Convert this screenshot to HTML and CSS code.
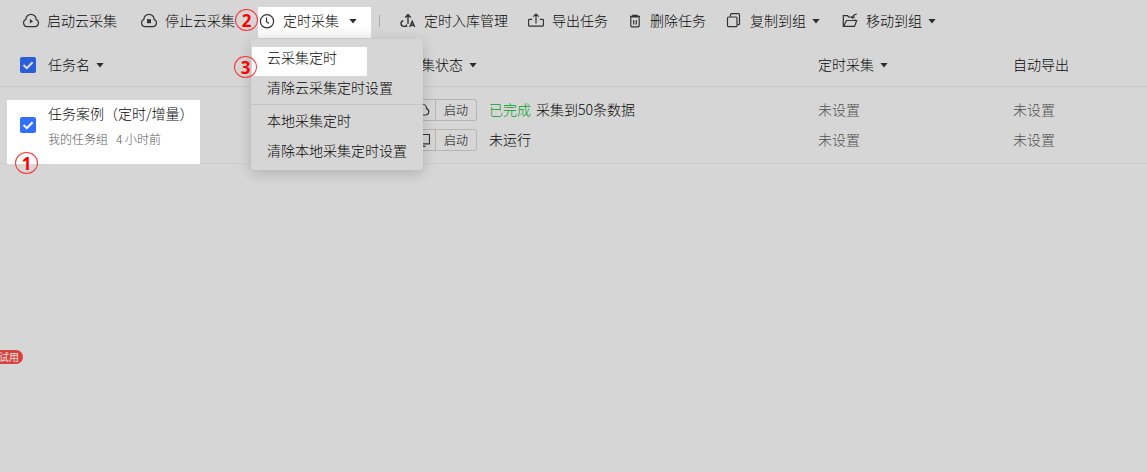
FILE: index.html
```html
<!DOCTYPE html>
<html lang="zh-CN">
<head>
    <meta charset="utf-8">
    <title>任务列表</title>
    <link rel="stylesheet" href="styles.css">
</head>
<body>
    <div class="toolbar">
        <div class="tool">
            <svg class="icon" viewBox="0 0 16 16"><path d="M4.2 13.7h7.6a3.8 3.8 0 0 0 1.3-7.3A5.1 5.1 0 0 0 2.9 6.4a3.8 3.8 0 0 0 1.3 7.3z"/><path class="fill" d="M6.9 6v4.4L10 8.2z"/></svg>
            <span>启动云采集</span>
        </div>
        <div class="tool">
            <svg class="icon" viewBox="0 0 16 16"><path d="M4.2 13.7h7.6a3.8 3.8 0 0 0 1.3-7.3A5.1 5.1 0 0 0 2.9 6.4a3.8 3.8 0 0 0 1.3 7.3z"/><path class="fill" d="M6 6.2h4v4H6z"/></svg>
            <span>停止云采集</span>
        </div>
        <div class="tool active">
            <svg class="icon" viewBox="0 0 16 16"><circle cx="8" cy="8.3" r="6.6"/><path d="M7.5 4.4v4.3l2.6 1.8"/></svg>
            <span>定时采集</span>
            <i class="caret"></i>
        </div>
        <div class="divider"></div>
        <div class="tool">
            <svg class="icon" viewBox="0 0 16 16"><path d="M8 11V1.6M5.2 4.4L8 1.6l2.8 2.8M3.3 7.8C1.6 8.2 1 9.2 1 10.6c0 2 1.3 2.8 3 2.8h2.4v-1.8M9.8 14l2.4-5.8 2.5 5.8M10.6 12.2h3.2" stroke-width="1.4"/></svg>
            <span>定时入库管理</span>
        </div>
        <div class="tool">
            <svg class="icon" viewBox="0 0 16 16"><path d="M4.2 6.4H1.5a1 1 0 0 0-1 1v4.7a1 1 0 0 0 1 1h13a1 1 0 0 0 1-1V7.4a1 1 0 0 0-1-1h-2.7M8 10.5V1.2M5.3 3.7L8 1l2.7 2.7"/></svg>
            <span>导出任务</span>
        </div>
        <div class="tool">
            <svg class="icon narrow" viewBox="0 0 14 16"><path class="fill" d="M4.2 1.8h5.6v1H12v1.8H2V2.8h2.2z"/><path d="M2.8 4.4v8.4a1 1 0 0 0 1 1h6.4a1 1 0 0 0 1-1V4.4M5.7 7v4.6M8.3 7v4.6"/></svg>
            <span>删除任务</span>
        </div>
        <div class="tool">
            <svg class="icon" viewBox="0 0 16 16"><rect x="1.5" y="4" width="9.5" height="9.7" rx="1"/><path d="M4.5 3.8V1.7a1 1 0 0 1 1-1h7a1 1 0 0 1 1 1v9a1 1 0 0 1-1 1h-1.3"/></svg>
            <span>复制到组</span>
            <i class="caret near"></i>
        </div>
        <div class="tool last">
            <svg class="icon" viewBox="0 0 16 16"><path d="M1.6 13.4L4.4 7.5h10.3l-2.2 5.9H1.3V2.6h4.2l1.4 1.6h1.6M13 7.2v-1M14.7 1.2c-2.5.2-3.8 1.4-4.2 3.8M8.9 3.3l1.6 1.9 2.2-1.4"/></svg>
            <span>移动到组</span>
            <i class="caret near"></i>
        </div>
    </div>

    <div class="table">
        <div class="row head">
            <div class="cell name">
                <span class="checkbox"><svg viewBox="0 0 16 16"><path d="M3.5 8l3.3 3.2 5.8-6"/></svg></span>
                <span>任务名</span><i class="caret near"></i>
            </div>
            <div class="cell"><span>采集状态</span><i class="caret near"></i></div>
            <div class="cell"><span>定时采集</span><i class="caret near"></i></div>
            <div class="cell"><span>自动导出</span></div>
        </div>
        <div class="row task">
            <div class="task-name">
                <span class="checkbox"><svg viewBox="0 0 16 16"><path d="M3.5 8l3.3 3.2 5.8-6"/></svg></span>
                <div>
                    <div class="title">任务案例（定时/增量）</div>
                    <div class="info"><span>我的任务组</span><span>4 小时前</span></div>
                </div>
            </div>
            <div class="lines">
                <div class="line">
                    <div class="run">
                        <span class="type"><svg class="icon" viewBox="0 0 16 16"><path d="M4.5 13h7a3.3 3.3 0 0 0 1.1-6.4A4.6 4.6 0 0 0 3.4 6.6 3.3 3.3 0 0 0 4.5 13z"/></svg></span>
                        <span class="start">启动</span>
                    </div>
                    <span class="done">已完成</span><span>采集到50条数据</span>
                </div>
                <div class="line">
                    <div class="run">
                        <span class="type"><svg class="icon" viewBox="0 0 16 16"><path d="M1.5 2.5h14v9.3h-14zM8 12v2.3M4.5 14.3h7"/></svg></span>
                        <span class="start">启动</span>
                    </div>
                    <span>未运行</span>
                </div>
            </div>
            <div class="lines muted">
                <div class="line"><span>未设置</span></div>
                <div class="line"><span>未设置</span></div>
            </div>
            <div class="lines muted">
                <div class="line"><span>未设置</span></div>
                <div class="line"><span>未设置</span></div>
            </div>
        </div>
    </div>

    <div class="menu">
        <div class="item current"><span>云采集定时</span></div>
        <div class="item">清除云采集定时设置</div>
        <div class="sep"></div>
        <div class="item">本地采集定时</div>
        <div class="item">清除本地采集定时设置</div>
    </div>

    <div class="step one">1</div>
    <div class="step two">2</div>
    <div class="step three">3</div>

    <div class="trial">试用</div>
</body>
</html>
```
FILE: styles.css
```css
* {
    box-sizing: border-box;
}
body {
    margin: 0;
    height: 472px;
    position: relative;
    overflow: hidden;
    background-color: #d6d6d6;
    color: #080808;
    font-family: "Noto Sans CJK SC", sans-serif;
    font-size: 14px;
    font-weight: 300;
    line-height: 20px;
    white-space: nowrap;
}
.toolbar {
    display: flex;
    align-items: center;
    height: 42px;
    padding-left: 23px;
}
.tool {
    display: flex;
    align-items: center;
    gap: 8px;
    margin-right: 20px;
}
.tool span,
.cell > span:not(.checkbox),
.line > span {
    padding-bottom: 2px;
}
.tool:nth-child(1) {
    margin-right: 24px;
}
.tool:nth-child(2) {
    margin-right: 23px;
}
.tool.active {
    height: 31px;
    margin: 3px 8px 0 0;
    padding: 0 13px 3px 1px;
    background: linear-gradient(#fff 60%, #f7f7f7);
}
.tool.last {
    margin-left: 1px;
}
.divider {
    width: 1px;
    height: 12px;
    margin-right: 20px;
    background-color: #aaa;
}
.icon {
    width: 16px;
    height: 16px;
    flex: none;
    fill: none;
    stroke: #333;
    stroke-width: 1.2;
}
.icon.narrow {
    width: 14px;
}
.icon .fill {
    fill: #333;
    stroke: none;
}
.caret {
    width: 8px;
    height: 5px;
    margin: 0 1px 0 2px;
    background-color: #2b2b2b;
    clip-path: polygon(0 0, 100% 0, 50% 100%);
}
.caret.near {
    margin-left: 6px;
}
.tool .caret.near {
    margin-left: -2px;
}
.row {
    display: grid;
    grid-template-columns: 407px 411px 195px 1fr;
}
.head {
    height: 45px;
    padding-top: 2px;
    border-bottom: 1px solid #c8c8c8;
}
.cell {
    display: flex;
    align-items: center;
}
.cell.name {
    padding-left: 20px;
}
.checkbox {
    width: 16px;
    height: 16px;
    flex: none;
    margin-right: 12px;
    border-radius: 2px;
    background-color: #2b5fda;
}
.checkbox svg {
    display: block;
    fill: none;
    stroke: #ddd;
    stroke-width: 2;
}
.task {
    height: 77px;
    border-bottom: 1px solid #cdcdcd;
}
.task-name {
    display: flex;
    width: 193px;
    height: 64px;
    margin: 13px 0 0 7px;
    padding: 3px 0 0 13px;
    background-color: #fff;
}
.task-name .checkbox {
    margin-top: 14px;
    background-color: #336fff;
}
.task-name .checkbox svg {
    stroke: #fff;
}
.info {
    display: flex;
    gap: 8px;
    margin-top: 6px;
    font-size: 12px;
    color: #5a5a5a;
}
.lines {
    padding-top: 8px;
}
.line {
    display: flex;
    align-items: center;
    height: 30px;
}
.muted {
    color: #505050;
}
.run {
    display: flex;
    width: 70px;
    height: 22px;
    margin-right: 12px;
    border: 1px solid #b4b4b4;
    border-radius: 3px;
    font-size: 12px;
}
.type {
    display: flex;
    align-items: center;
    justify-content: center;
    width: 28px;
    border-right: 1px solid #b4b4b4;
}
.start {
    flex: 1;
    text-align: center;
}
.done {
    margin-right: 5px;
    color: #00a02a;
}
.menu {
    position: absolute;
    left: 251px;
    top: 39px;
    width: 172px;
    height: 131px;
    padding-top: 4px;
    border-radius: 4px;
    background-color: #d6d6d6;
    box-shadow: 0 3px 14px rgba(0, 0, 0, 0.18);
}
.item {
    height: 30px;
    padding-left: 16px;
    line-height: 28px;
}
.item.current {
    padding: 4px 0 0 1px;
}
.item.current span {
    display: block;
    width: 115px;
    height: 29px;
    padding-left: 15px;
    line-height: 20px;
    background-color: #fff;
}
.sep {
    height: 1px;
    margin: 1px 0;
    background-color: #c5c5c5;
}
/* numbered step markers */
.step {
    position: absolute;
    width: 23px;
    height: 22px;
    border: 1px solid #f33;
    border-radius: 50%;
    color: #f00;
    font-family: "Noto Sans", sans-serif;
    font-size: 17px;
    font-weight: bold;
    line-height: 21px;
    text-align: center;
}
.step.one {
    left: 15px;
    top: 152px;
}
.step.two {
    left: 235px;
    top: 9px;
}
.step.three {
    left: 234px;
    top: 56px;
}
.trial {
    position: absolute;
    left: -8px;
    top: 350px;
    width: 31px;
    height: 14px;
    padding-left: 7px;
    border-radius: 7px;
    background-color: #d9403a;
    color: #e6e6e6;
    font-size: 10px;
    font-weight: 400;
    line-height: 13px;
}
```
